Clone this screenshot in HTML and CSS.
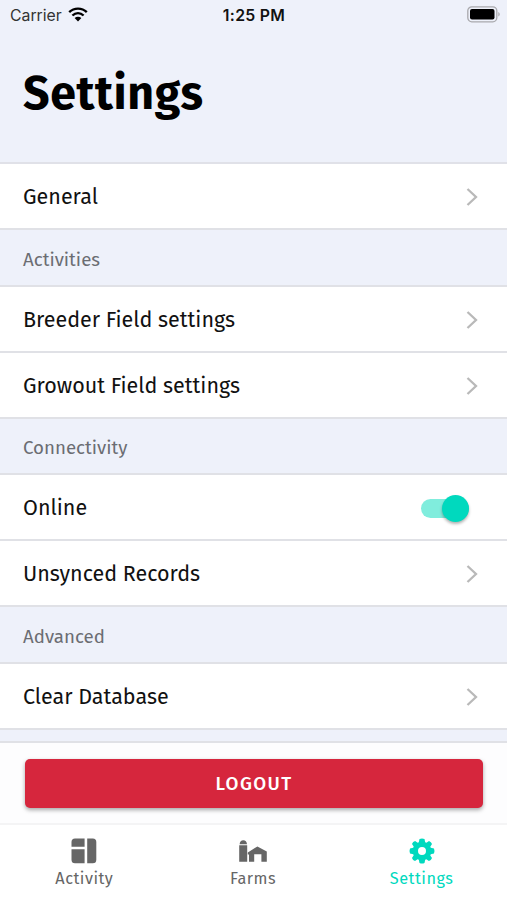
FILE: index.html
```
<!DOCTYPE html>
<html lang="en">
<head>
  <meta charset="UTF-8" />
  <title>Settings</title>
  <link rel="stylesheet" href="styles.css">
</head>
<body>
  <div class="app">
    <!-- Status bar -->
    <div class="status">
      <div class="carrier">
        <span>Carrier</span>
        <svg class="wifi" viewBox="0 0 20 15">
          <path d="M1.2 5.2C6.2.4 13.8.4 18.8 5.2M4.4 8.5C7.7 5.4 12.3 5.4 15.6 8.5" fill="none" stroke="#000" stroke-width="2.4"/>
          <path d="M6.6 11C8.6 9.2 11.4 9.2 13.4 11L10 14.4Z"/>
        </svg>
      </div>
      <div class="time">1:25 PM</div>
      <svg class="battery" viewBox="0 0 33 17">
        <rect x=".8" y=".8" width="29" height="15" rx="4" fill="none" stroke="#a9a9ad" stroke-width="1.3"/>
        <rect x="3" y="3" width="24.5" height="10.6" rx="2" />
        <path d="M31.3 6C33.2 7 33.2 9.6 31.3 10.6Z" fill="#a9a9ad"/>
      </svg>
    </div>

    <h1>Settings</h1>

    <!-- Settings list -->
    <div class="list">
      <div class="item">
        <span>General</span>
        <svg class="chevron" viewBox="0 0 12 20"><path d="M1.5 2L10 10L1.5 18"/></svg>
      </div>
      <div class="section">Activities</div>
      <div class="item">
        <span>Breeder Field settings</span>
        <svg class="chevron" viewBox="0 0 12 20"><path d="M1.5 2L10 10L1.5 18"/></svg>
      </div>
      <div class="item">
        <span>Growout Field settings</span>
        <svg class="chevron" viewBox="0 0 12 20"><path d="M1.5 2L10 10L1.5 18"/></svg>
      </div>
      <div class="section">Connectivity</div>
      <div class="item">
        <span>Online</span>
        <div class="toggle"><div class="knob"></div></div>
      </div>
      <div class="item">
        <span>Unsynced Records</span>
        <svg class="chevron" viewBox="0 0 12 20"><path d="M1.5 2L10 10L1.5 18"/></svg>
      </div>
      <div class="section">Advanced</div>
      <div class="item">
        <span>Clear Database</span>
        <svg class="chevron" viewBox="0 0 12 20"><path d="M1.5 2L10 10L1.5 18"/></svg>
      </div>
    </div>

    <div class="footer">
      <button class="logout">LOGOUT</button>
    </div>

    <!-- Tabs -->
    <div class="tabs">
      <div class="tab">
        <svg viewBox="0 0 26 26">
          <path d="M4 .5H13.6V8.7H.5V4Q.5.5 4 .5ZM.5 11.2H13.6V25.2H4Q.5 25.2.5 21.7ZM16.2.5H21.8Q25.3.5 25.3 4V21.7Q25.3 25.2 21.8 25.2H16.2Z"/>
        </svg>
        <span>Activity</span>
      </div>
      <div class="tab">
        <svg class="farm" viewBox="0 0 28 26">
          <path d="M.6 6.2Q1 2.2 4.3 2.2T8 6.2ZM.2 7.3H8.2V23.8H.2ZM8.8 14.6L18.4 8.4L27.8 13.4V23.8H22.4V16.2H15.2V23.8H10V16.5H8.8Z"/>
        </svg>
        <span>Farms</span>
      </div>
      <div class="tab active">
        <svg viewBox="0 0 26 26">
          <path fill-rule="evenodd" d="M10.5 1Q13 0 15.5 1L16.2 4.2L17.4 4.7L20 3Q22.3 3.8 23 6.1L21.3 8.7L21.8 9.8L25 10.5Q26 13 25 15.5L21.8 16.2L21.3 17.4L23 20Q22.2 22.3 19.9 23L17.3 21.3L16.2 21.8L15.5 25Q13 26 10.5 25L9.8 21.8L8.6 21.3L6 23Q3.7 22.2 3 19.9L4.7 17.3L4.2 16.2L1 15.5Q0 13 1 10.5L4.2 9.8L4.7 8.6L3 6Q3.8 3.7 6.1 3L8.7 4.7L9.8 4.2ZM13 9A4 4 0 1 0 13 17A4 4 0 1 0 13 9Z"/>
        </svg>
        <span>Settings</span>
      </div>
    </div>
  </div>
</body>
</html>
```
FILE: styles.css
```
body {
  background-color: #eef1fa;
  color: #111;
  font-family: 'Fira Sans', 'Noto Sans', sans-serif;
  margin: 0;
}
.app {
  display: flex;
  flex-direction: column;
  height: 900px;
  overflow: hidden;
}
.status {
  box-sizing: border-box;
  display: grid;
  grid-template-columns: 1fr auto 1fr;
  align-items: center;
  height: 30px;
  padding: 1px 7px 0 10px;
  font-family: Inter, sans-serif;
  font-size: 15.8px;
}
.carrier {
  display: flex;
  align-items: center;
  gap: 6px;
  color: #333;
}
.wifi {
  width: 20px;
  height: 15px;
  margin-bottom: 1px;
}
.time {
  margin-right: 2px;
  font-weight: 600;
  letter-spacing: 0.3px;
}
.battery {
  width: 33px;
  height: 17px;
  justify-self: end;
  margin-bottom: 2px;
}
h1 {
  box-sizing: border-box;
  height: 132px;
  margin: 0;
  padding: 31px 23px 0;
  color: #000;
  font-size: 46.5px;
  line-height: 66px;
  letter-spacing: 0.6px;
}
.list {
  height: 579px;
  border-top: 2px solid #e0e1e8;
}
.item,
.section {
  box-sizing: border-box;
  display: flex;
  align-items: center;
  justify-content: space-between;
  padding: 2px 29px 0 23px;
  border-bottom: 2px solid #e0e1e6;
}
.item {
  height: 66px;
  background-color: #fff;
  font-size: 21.5px;
}
.section {
  height: 56.8px;
  padding-top: 5px;
  color: #6b6d72;
  font-size: 18.7px;
}
.chevron {
  width: 12px;
  height: 20px;
  fill: none;
  stroke: #b9b9b9;
  stroke-width: 2.3;
}
.toggle {
  display: flex;
  align-items: center;
  justify-content: flex-end;
  width: 48px;
  height: 19px;
  margin-right: 9px;
  border-radius: 10px;
  background-color: #80eddd;
}
.knob {
  flex: none;
  width: 27px;
  height: 27px;
  border-radius: 50%;
  background-color: #00d9be;
  box-shadow: 0 2px 3px rgba(0, 0, 0, 0.3);
}
.footer {
  box-sizing: border-box;
  height: 82px;
  padding: 16px 24px 0 25px;
  border-top: 2px solid #e0e1e6;
  background-color: #fdfdfe;
}
.logout {
  display: block;
  width: 100%;
  height: 49px;
  border: none;
  border-radius: 5px;
  background-color: #d6263d;
  box-shadow: 0 2px 4px rgba(0, 0, 0, 0.35);
  color: #fff;
  font-family: inherit;
  font-size: 18.7px;
  font-weight: 500;
  letter-spacing: 1.4px;
}
.tabs {
  box-sizing: border-box;
  display: grid;
  grid-template-columns: repeat(3, 1fr);
  height: 77px;
  padding: 13px 1px 0 0;
  border-top: 2px solid #f4f4f5;
  background-color: #fff;
}
.tab {
  display: flex;
  flex-direction: column;
  align-items: center;
  color: #666;
  fill: currentColor;
  font-size: 16.3px;
  line-height: 24px;
  letter-spacing: 0.5px;
}
.tab svg {
  width: 26px;
  height: 26px;
  margin-bottom: 3px;
}
.tab .farm {
  width: 28px;
}
.active {
  color: #00d9be;
}
```
